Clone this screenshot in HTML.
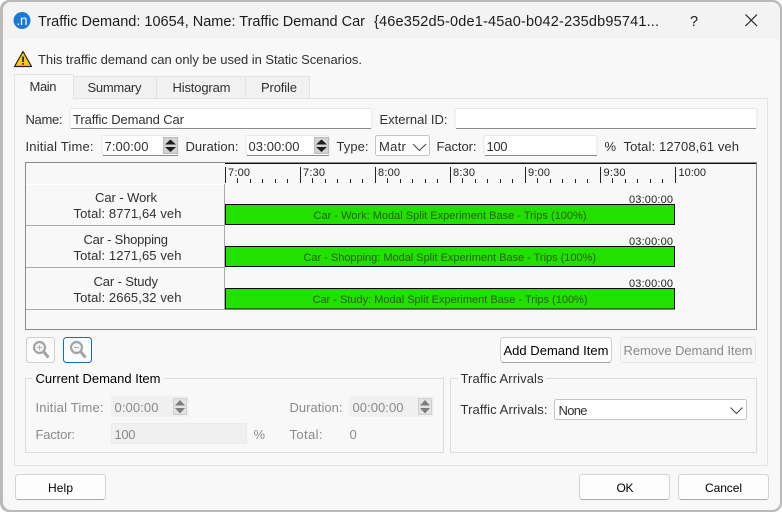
<!DOCTYPE html>
<html><head><meta charset="utf-8"><title>Traffic Demand</title>
<style>
html,body{margin:0;padding:0;width:782px;height:512px;overflow:hidden;background:#c9c6c3}
svg{display:block;position:absolute;left:0;top:0}
text{font-family:"Liberation Sans",Arial,sans-serif;font-size:13px;fill:#303030}
.d{fill:#8a8a8a}
.b{fill:#2c5c10;font-size:11px}
.m{fill:#222;font-size:11px}
.t{font-size:14.5px;fill:#1c1c1c}
.k{fill:#000}
.s{fill:#000;font-size:12px}
</style></head><body>
<svg width="782" height="512" viewBox="0 0 782 512" lengthAdjust="spacing">
<rect x="0" y="0" width="782" height="512" fill="#ffffff"/>
<rect x="0" y="0" width="782" height="512" rx="9" fill="#bdb9b6"/>
<rect x="3" y="2" width="777" height="508" rx="8" fill="#f8f8f8"/>
<path d="M3 39V10a8 8 0 0 1 8-8H772a8 8 0 0 1 8 8V39Z" fill="#f3f3f3"/>

<!-- title -->
<circle cx="22" cy="20.5" r="8.5" fill="#1c7ad6"/>
<text x="16.5" y="25" style="font-size:13.5px;fill:#fff" textLength="11">.n</text>
<text class="t" x="38" y="26" textLength="327">Traffic Demand: 10654, Name: Traffic Demand Car</text>
<text class="t" x="374" y="26" textLength="285">{46e352d5-0de1-45a0-b042-235db95741...</text>
<text class="t" x="690" y="26" textLength="8">?</text>
<path d="M745.5 14.5 757 26M757 14.5 745.5 26" stroke="#222" stroke-width="1.2" fill="none"/>

<!-- warning -->
<path d="M23 51.5 31.5 66.5H14.5Z" fill="#fdc913" stroke="#222" stroke-width="1.2" stroke-linejoin="round"/>
<rect x="22.2" y="56.5" width="1.7" height="5.5" fill="#222"/>
<rect x="22.2" y="63" width="1.7" height="1.7" fill="#222"/>
<text x="38" y="64" textLength="324">This traffic demand can only be used in Static Scenarios.</text>

<!-- tabs -->
<rect x="14.5" y="98.5" width="753" height="367" fill="#f8f8f8" stroke="#e3e3e3"/>
<path d="M73.5 98V76.5H309.5V98M156.5 76.5V98M245.5 76.5V98" fill="#f1f1f1" stroke="#e3e3e3"/>
<path d="M14.5 99V74.5H73.5V99Z" fill="#f8f8f8"/>
<path d="M14.5 98.5V74.5H73.5V98.5" fill="none" stroke="#e3e3e3"/>
<text x="29.5" y="91" textLength="27">Main</text>
<text x="87.5" y="92" textLength="54">Summary</text>
<text x="172.5" y="92" textLength="58">Histogram</text>
<text x="261" y="92" textLength="36">Profile</text>

<!-- row 1 -->
<text x="25.5" y="124" textLength="37">Name:</text>
<rect x="70" y="108.5" width="302" height="20" rx="2" fill="#fff" stroke="#e6e6e6"/>
<path d="M71 128.5H371" stroke="#8a8a8a"/>
<text x="73" y="124" textLength="111">Traffic Demand Car</text>
<text x="379.5" y="124" textLength="68">External ID:</text>
<rect x="455" y="108.5" width="302" height="20" rx="2" fill="#fff" stroke="#e6e6e6"/>
<path d="M456 128.5H756" stroke="#8a8a8a"/>

<!-- row 2 -->
<text x="25.5" y="151" textLength="68">Initial Time:</text>
<rect x="102" y="135.5" width="76" height="20" rx="2" fill="#fff" stroke="#e6e6e6"/>
<path d="M103 155.5H178" stroke="#8a8a8a"/>
<text x="104.5" y="151" textLength="44">7:00:00</text>
<rect x="163.5" y="137.5" width="14" height="16" fill="#d2d2d2" stroke="#bbb"/>
<path d="M170.5 139.5 176 144.5H165ZM165 147H176L170.5 152Z" fill="#1e1e1e"/>
<text x="185.5" y="151" textLength="53">Duration:</text>
<rect x="246" y="135.5" width="83" height="20" rx="2" fill="#fff" stroke="#e6e6e6"/>
<path d="M247 155.5H329" stroke="#8a8a8a"/>
<text x="248.5" y="151" textLength="51">03:00:00</text>
<rect x="314.5" y="137.5" width="14" height="16" fill="#d2d2d2" stroke="#bbb"/>
<path d="M321.5 139.5 327 144.5H316ZM316 147H327L321.5 152Z" fill="#1e1e1e"/>
<text x="336.5" y="151" textLength="32">Type:</text>
<rect x="375.5" y="135.5" width="54" height="20" rx="2" fill="#fff" stroke="#c4c4c4"/>
<text x="379" y="151" textLength="30">Matri</text>
<rect x="407" y="137" width="22" height="17" fill="#fff"/>
<path d="M413 144 419.5 150.5 426 144" fill="none" stroke="#444" stroke-width="1"/>
<text x="436.5" y="151" textLength="40">Factor:</text>
<rect x="484" y="135.5" width="113" height="20" rx="2" fill="#fff" stroke="#e6e6e6"/>
<path d="M485 155.5H597" stroke="#8a8a8a"/>
<text x="486.5" y="151" textLength="21">100</text>
<text x="604.5" y="151" textLength="12">%</text>
<text x="623.5" y="151" textLength="115.5">Total: 12708,61 veh</text>

<!-- chart -->
<rect x="25.5" y="162.5" width="731" height="167" fill="#f8f8f8" stroke="#878b93"/>
<path d="M225 163.5H756" stroke="#111"/>
<path d="M26 184.5H225" stroke="#fff"/>
<path d="M26 225.5H225M26 267.5H225M26 309.5H225" stroke="#aaa"/>
<path d="M224.5 184V310" stroke="#aaa"/>
<path d="M225.5 167V183M300.5 167V183M375.5 167V183M450.5 167V183M525.5 167V183M600.5 167V183M675.5 167V183" stroke="#222"/>
<path d="M237.5 178V183M250.5 179V183M262.5 179V183M275.5 179V183M287.5 179V183M312.5 178V183M325.5 179V183M337.5 179V183M350.5 179V183M362.5 179V183M387.5 178V183M400.5 179V183M412.5 179V183M425.5 179V183M437.5 179V183M462.5 178V183M475.5 179V183M487.5 179V183M500.5 179V183M512.5 179V183M537.5 178V183M550.5 179V183M562.5 179V183M575.5 179V183M587.5 179V183M612.5 178V183M625.5 179V183M637.5 179V183M650.5 179V183M662.5 179V183" stroke="#222"/>
<text class="m" x="228" y="176" textLength="22">7:00</text>
<text class="m" x="303" y="176" textLength="22">7:30</text>
<text class="m" x="378" y="176" textLength="22">8:00</text>
<text class="m" x="453" y="176" textLength="22">8:30</text>
<text class="m" x="528" y="176" textLength="22">9:00</text>
<text class="m" x="603.5" y="176" textLength="22">9:30</text>
<text class="m" x="678.5" y="176" textLength="27.5">10:00</text>

<text x="95" y="202" textLength="62">Car - Work</text>
<text x="73.5" y="218" textLength="108">Total: 8771,64 veh</text>
<text x="83.5" y="244" textLength="84.5">Car - Shopping</text>
<text x="73.5" y="260" textLength="108">Total: 1271,65 veh</text>
<text x="93.5" y="286" textLength="64.5">Car - Study</text>
<text x="73.5" y="302" textLength="108">Total: 2665,32 veh</text>

<rect x="225.5" y="204.5" width="449" height="20" fill="#22e000" stroke="#0a0a0a"/>
<rect x="225.5" y="246.5" width="449" height="20" fill="#22e000" stroke="#0a0a0a"/>
<rect x="225.5" y="288.5" width="449" height="20.5" fill="#22e000" stroke="#0a0a0a"/>
<text class="m" x="629" y="203" textLength="44">03:00:00</text>
<text class="m" x="629" y="245" textLength="44">03:00:00</text>
<text class="m" x="629" y="287" textLength="44">03:00:00</text>
<text class="b" x="313.5" y="219" textLength="273">Car - Work: Modal Split Experiment Base - Trips (100%)</text>
<text class="b" x="303.5" y="261" textLength="292.5">Car - Shopping: Modal Split Experiment Base - Trips (100%)</text>
<text class="b" x="312.5" y="303" textLength="275">Car - Study: Modal Split Experiment Base - Trips (100%)</text>

<!-- zoom buttons -->
<rect x="26.5" y="337.5" width="28" height="25" rx="3" fill="#fbfbfb" stroke="#cfcfcf"/>
<rect x="63.5" y="337.5" width="28" height="25" rx="3" fill="#fbfbfb" stroke="#0f6cbd"/>
<circle cx="39.5" cy="347.5" r="5.5" fill="#f4f4f4" stroke="#a4a4a4" stroke-width="2.2"/>
<path d="M43.5 351.5 48.5 357.5" stroke="#a4a4a4" stroke-width="3"/>
<path d="M37 347.5H42M39.5 345V350" stroke="#b0b0b0"/>
<circle cx="76.5" cy="347.5" r="5.5" fill="#f4f4f4" stroke="#a4a4a4" stroke-width="2.2"/>
<path d="M80.5 351.5 85.5 357.5" stroke="#a4a4a4" stroke-width="3"/>
<path d="M74 347.5H79" stroke="#b0b0b0"/>

<!-- action buttons -->
<rect x="500.5" y="337.5" width="111" height="25" rx="3" fill="#fdfdfd" stroke="#cfcfcf"/>
<path d="M502 362.5H610" stroke="#a8a8a8"/>
<text class="k" x="503.5" y="355" textLength="105">Add Demand Item</text>
<rect x="620.5" y="337.5" width="135" height="25" rx="3" fill="#f6f6f6" stroke="#e4e4e4"/>
<text class="d" x="623.5" y="355" textLength="129">Remove Demand Item</text>

<!-- current demand item -->
<rect x="25.5" y="378.5" width="418" height="74" fill="none" stroke="#dcdcdc"/>
<rect x="32" y="372" width="132" height="14" fill="#f8f8f8"/>
<text class="k" x="35.5" y="383" textLength="125">Current Demand Item</text>
<text class="d" x="35.5" y="412" textLength="68">Initial Time:</text>
<rect x="111" y="396" width="78" height="21" rx="1" fill="#f0f0f0"/>
<text class="d" x="114.5" y="412" textLength="44">0:00:00</text>
<rect x="173.5" y="398.5" width="13" height="16" fill="#e2e2e2" stroke="#d0d0d0"/>
<path d="M180 400 185 405.5H175ZM175 408H185L180 413.5Z" fill="#7d7d7d"/>
<text class="d" x="289.5" y="412" textLength="53">Duration:</text>
<rect x="349" y="396" width="85" height="21" rx="1" fill="#f0f0f0"/>
<text class="d" x="352.5" y="412" textLength="51">00:00:00</text>
<rect x="418.5" y="398.5" width="13" height="16" fill="#e2e2e2" stroke="#d0d0d0"/>
<path d="M425 400 430 405.5H420ZM420 408H430L425 413.5Z" fill="#7d7d7d"/>
<text class="d" x="35.5" y="439" textLength="39.5">Factor:</text>
<rect x="111.5" y="423.5" width="135" height="20" fill="#f0f0f0" stroke="#ebebeb"/>
<text class="d" x="114.5" y="439" textLength="21">100</text>
<text class="d" x="253.5" y="439" textLength="12">%</text>
<text class="d" x="289.5" y="439" textLength="33">Total:</text>
<text class="d" x="349.5" y="439" textLength="7">0</text>

<!-- traffic arrivals -->
<rect x="450.5" y="378.5" width="306" height="74" fill="none" stroke="#dcdcdc"/>
<rect x="458" y="372" width="88" height="14" fill="#f8f8f8"/>
<text x="460.5" y="383" textLength="83">Traffic Arrivals</text>
<text x="460.5" y="414" textLength="87">Traffic Arrivals:</text>
<rect x="554.5" y="399.5" width="192" height="20" rx="2" fill="#fff" stroke="#c4c4c4"/>
<text x="558.5" y="415" textLength="29">None</text>
<path d="M730.5 407.5 736.5 413.5 742.5 407.5" fill="none" stroke="#444"/>

<!-- bottom buttons -->
<rect x="15.5" y="474.5" width="90" height="25" rx="3" fill="#fdfdfd" stroke="#d2d2d2"/>
<path d="M17 499.5H104" stroke="#adadad"/>
<text class="s" x="48" y="492" textLength="25">Help</text>
<rect x="579.5" y="474.5" width="90" height="25" rx="3" fill="#fdfdfd" stroke="#d2d2d2"/>
<path d="M581 499.5H668" stroke="#adadad"/>
<text class="s" x="616.5" y="492" textLength="17">OK</text>
<rect x="678.5" y="474.5" width="90" height="25" rx="3" fill="#fdfdfd" stroke="#d2d2d2"/>
<path d="M680 499.5H767" stroke="#adadad"/>
<text class="s" x="705" y="492" textLength="37">Cancel</text>
</svg>
</body></html>
